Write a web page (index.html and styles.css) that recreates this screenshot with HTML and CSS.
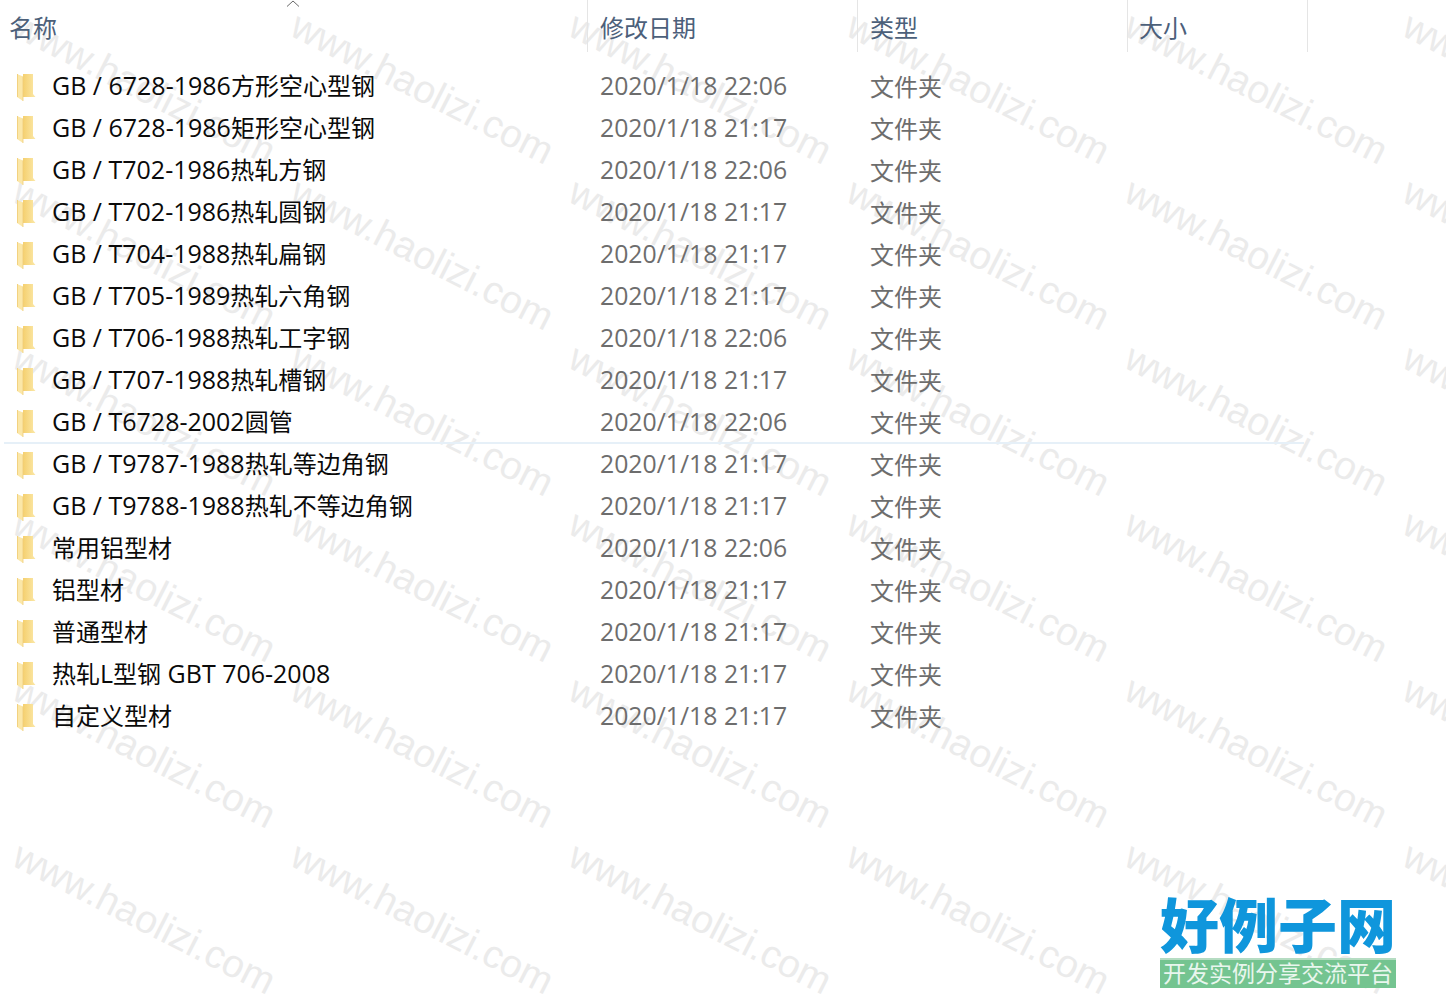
FILE: index.html
```html
<!DOCTYPE html>
<html lang="zh-CN">
<head>
  <meta charset="UTF-8">
  <title>文件列表</title>
  <link rel="stylesheet" href="styles.css">
</head>
<body>
  <!-- Watermark tiles -->
  <div class="watermark" id="marks"></div>

  <div class="explorer">
    <div class="head-row">
      <div class="head-cell name-col">名称
        <svg class="sort-arrow" width="14" height="7" viewBox="0 0 14 7"><path d="M1 6.500 7 1l6 5.500" fill="none" stroke="#6a6a6a" stroke-width="1"/></svg>
      </div>
      <div class="head-cell date-col">修改日期</div>
      <div class="head-cell type-col">类型</div>
      <div class="head-cell size-col">大小</div>
    </div>
    <div class="rows" id="rows"></div>
  </div>

  <div class="logo">
    <div class="logo-title">好例子网</div>
    <div class="logo-sub">开发实例分享交流平台</div>
  </div>

  <script src="app.js"></script>
</body>
</html>
```

FILE: styles.css
```css
* {
  margin: 0;
  padding: 0;
  box-sizing: border-box;
}

body {
  position: relative;
  width: 1446px;
  height: 998px;
  overflow: hidden;
  background: #ffffff;
  font-family: "Open Sans", "Noto Sans CJK SC", sans-serif;
  font-size: 24px;
}

.watermark {
  position: absolute;
  top: 5px;
  left: 25px;
  display: grid;
  grid-template-columns: repeat(6, 278px);
  grid-auto-rows: 166px;
}

.watermark span {
  font-family: "Liberation Sans", sans-serif;
  font-size: 39px;
  line-height: 1;
  color: #ebebeb;
  white-space: nowrap;
  transform: rotate(27deg);
  transform-origin: 0 0;
}

.explorer {
  position: relative;
}

.head-row {
  display: flex;
  height: 52px;
  margin-bottom: 14px;
  color: #4c607a;
}

.head-cell {
  position: relative;
  padding-top: 11px;
  line-height: 34px;
  border-right: 1px solid #e5e5e5;
}

.name-col { width: 588px; padding-left: 9px; }
.date-col { width: 270px; padding-left: 12px; }
.type-col { width: 270px; padding-left: 12px; }
.size-col { width: 180px; padding-left: 11px; }

.sort-arrow {
  position: absolute;
  top: 0;
  left: 286px;
}

.row {
  display: flex;
  align-items: center;
  height: 42px;
  margin-left: 4px;
  width: 1300px;
}

.row.line {
  box-shadow: inset 0 -2px 0 #e6f0f8;
}

.row .name {
  display: flex;
  align-items: center;
  width: 584px;
  padding-left: 13px;
  color: #0a0a0a;
}

.row .date,
.row .type {
  padding-bottom: 4px;
}

.row .label {
  padding-bottom: 5px;
}

.latin {
  font-size: 25px;
}

.folder {
  width: 19px;
  height: 27px;
  margin-right: 16px;
  flex-shrink: 0;
}

.row .date {
  width: 270px;
  padding-left: 12px;
  font-size: 24.8px;
  color: #6d6d6d;
}

.row .type {
  padding-left: 12px;
  color: #6d6d6d;
}

.logo {
  position: absolute;
  left: 1160px;
  top: 892px;
  width: 236px;
}

.logo-title {
  font-family: "Noto Sans CJK SC", sans-serif;
  font-weight: 900;
  font-size: 59px;
  line-height: 62px;
  margin-bottom: 4px;
  color: #0f96dc;
  white-space: nowrap;
}

.logo-sub {
  background: #74c490;
  border-top: 2px solid #b5dcc2;
  height: 30px;
  line-height: 24px;
  font-family: "Noto Sans CJK SC", sans-serif;
  font-size: 23px;
  color: #e9f6ee;
  text-align: center;
  white-space: nowrap;
}
```

FILE: app.js
```js
const files = [
  ["GB / 6728-1986方形空心型钢", "2020/1/18 22:06"],
  ["GB / 6728-1986矩形空心型钢", "2020/1/18 21:17"],
  ["GB / T702-1986热轧方钢", "2020/1/18 22:06"],
  ["GB / T702-1986热轧圆钢", "2020/1/18 21:17"],
  ["GB / T704-1988热轧扁钢", "2020/1/18 21:17"],
  ["GB / T705-1989热轧六角钢", "2020/1/18 21:17"],
  ["GB / T706-1988热轧工字钢", "2020/1/18 22:06"],
  ["GB / T707-1988热轧槽钢", "2020/1/18 21:17"],
  ["GB / T6728-2002圆管", "2020/1/18 22:06"],
  ["GB / T9787-1988热轧等边角钢", "2020/1/18 21:17"],
  ["GB / T9788-1988热轧不等边角钢", "2020/1/18 21:17"],
  ["常用铝型材", "2020/1/18 22:06"],
  ["铝型材", "2020/1/18 21:17"],
  ["普通型材", "2020/1/18 21:17"],
  ["热轧L型钢 GBT 706-2008", "2020/1/18 21:17"],
  ["自定义型材", "2020/1/18 21:17"]
];

const folderIcon = `<svg class="folder" viewBox="0 0 19 27">
  <defs><linearGradient id="fg" x1="0" x2="1"><stop offset="0" stop-color="#f5d06f"/><stop offset="1" stop-color="#fbe8a8"/></linearGradient></defs>
  <path d="M6 0h10v20l2.500 3H6z" fill="url(#fg)"/>
  <path d="M0 0l6 2.500V27l-6-4z" fill="#fbe7a8"/>
  <path d="M.5 0v23" stroke="#f3d27f" stroke-width="1"/>
  <path d="M6 2.500V27" stroke="#f0cd78" stroke-width=".8"/>
</svg>`;

// digits and latin letters run a bit larger than the CJK glyphs
function wrapLatin(text) {
  return text.replace(/[\x20-\x7e]+/g, (m) => `<span class="latin">${m}</span>`);
}

const rows = document.querySelector("#rows");
files.forEach((f, i) => {
  const line = i === 8 ? " line" : "";
  rows.innerHTML += `<div class="row${line}">
    <div class="name">${folderIcon}<span class="label">${wrapLatin(f[0])}</span></div>
    <div class="date">${f[1]}</div>
    <div class="type">文件夹</div>
  </div>`;
});

const marks = document.querySelector("#marks");
for (let i = 0; i < 36; i++) {
  marks.innerHTML += "<span>www.haolizi.com</span>";
}
```
